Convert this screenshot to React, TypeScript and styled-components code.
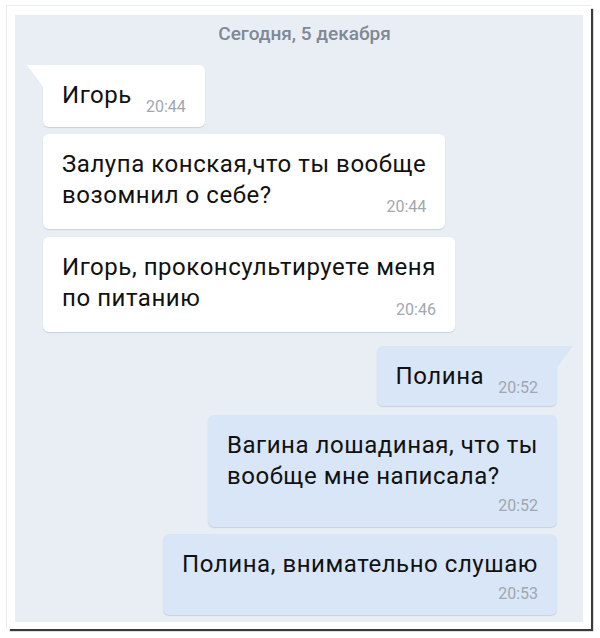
import styled, { createGlobalStyle } from "styled-components";

const GlobalStyle = createGlobalStyle`
  html, body {
    margin: 0;
    padding: 0;
    background: #ffffff;
  }
  body {
    font-family: Roboto, "Noto Sans", sans-serif;
  }
`;

const Page = styled.div`
  width: 600px;
  height: 638px;
  padding: 5px 0 0 6px;
  box-sizing: border-box;
`;

const Frame = styled.div`
  width: 585px;
  height: 624px;
  box-sizing: border-box;
  padding: 9px 8px 7px 8px;
  background: #ffffff;
  border-top: 1px solid #ececec;
  border-left: 1px solid #ececec;
  box-shadow: 3px 3px 1px -1px #3a3a3a;
`;

const Chat = styled.div`
  height: 100%;
  background: #e9eef4;
  display: flex;
  flex-direction: column;
  padding: 8px 26px 0 28px;
  box-sizing: border-box;
`;

const DateLabel = styled.div`
  align-self: center;
  margin-left: 9px;
  font-size: 19px;
  font-weight: 500;
  color: #7f8894;
  line-height: 22px;
  margin-bottom: 20px;
`;

const Row = styled.div<{ $out?: boolean; $gap: number }>`
  display: flex;
  justify-content: ${({ $out }) => ($out ? "flex-end" : "flex-start")};
  margin-top: ${({ $gap }) => $gap}px;
`;

const Bubble = styled.div<{ $out?: boolean; $tail?: boolean; $pb: number }>`
  position: relative;
  background: ${({ $out }) => ($out ? "#d8e6f7" : "#ffffff")};
  border-radius: ${({ $tail, $out }) =>
    $tail ? ($out ? "6px 0 6px 6px" : "0 6px 6px 6px") : "6px"};
  box-shadow: 0 1px 1px rgba(140, 155, 175, 0.35);
  padding: 15px 19px ${({ $pb }) => $pb}px 19px;
  display: flex;
  flex-direction: column;
  color: #111111;
`;

const Line = styled.div`
  font-size: 24px;
  letter-spacing: 0.55px;
  line-height: 31px;
  white-space: nowrap;
`;

const LastRow = styled.div<{ $gap: number }>`
  display: flex;
  align-items: baseline;
  justify-content: space-between;
  gap: ${({ $gap }) => $gap}px;
`;

const Time = styled.span<{ $shift: number }>`
  font-size: 16px;
  line-height: 18px;
  color: #a1a7af;
  position: relative;
  top: ${({ $shift }) => $shift}px;
`;

const OwnTime = styled.span`
  align-self: flex-end;
  font-size: 16px;
  line-height: 18px;
  color: #a1a7af;
  margin-top: 5px;
`;

const Tail = ({ out }: { out?: boolean }) => (
  <svg
    width="17"
    height="23"
    viewBox="0 0 17 23"
    style={{
      position: "absolute",
      top: 0,
      [out ? "right" : "left"]: -16,
      transform: out ? "scaleX(-1)" : undefined,
    }}
  >
    <path d="M0 0 L17 0 L17 23 Z" fill={out ? "#d8e6f7" : "#ffffff"} />
  </svg>
);

type Msg = {
  lines: string[];
  time: string;
  out?: boolean;
  tail?: boolean;
  // "inline"/"beside" – time next to the last line, "own" – time on its own line
  mode: "inline" | "beside" | "own";
  gap: number;
  pb: number;
};

const messages: Msg[] = [
  { lines: ["Игорь"], time: "20:44", tail: true, mode: "inline", gap: 0, pb: 16 },
  {
    lines: ["Залупа конская,что ты вообще", "возомнил о себе?"],
    time: "20:44",
    mode: "beside",
    gap: 7,
    pb: 18,
  },
  {
    lines: ["Игорь, проконсультируете меня", "по питанию"],
    time: "20:46",
    mode: "beside",
    gap: 8,
    pb: 18,
  },
  {
    lines: ["Полина"],
    time: "20:52",
    out: true,
    tail: true,
    mode: "inline",
    gap: 14,
    pb: 14,
  },
  {
    lines: ["Вагина лошадиная, что ты", "вообще мне написала?"],
    time: "20:52",
    out: true,
    mode: "own",
    gap: 9,
    pb: 12,
  },
  {
    lines: ["Полина, внимательно слушаю"],
    time: "20:53",
    out: true,
    mode: "own",
    gap: 7,
    pb: 12,
  },
];

export default function App() {
  return (
    <>
      <GlobalStyle />
      <Page>
        <Frame>
          <Chat>
            <DateLabel>Сегодня, 5 декабря</DateLabel>
            {messages.map((m, i) => {
              const head = m.lines.slice(0, -1);
              const last = m.lines[m.lines.length - 1];
              return (
                <Row key={i} $out={m.out} $gap={m.gap}>
                  <Bubble $out={m.out} $tail={m.tail} $pb={m.pb}>
                    {m.tail && <Tail out={m.out} />}
                    {m.mode === "own" ? (
                      <>
                        {m.lines.map((l) => (
                          <Line key={l}>{l}</Line>
                        ))}
                        <OwnTime>{m.time}</OwnTime>
                      </>
                    ) : (
                      <>
                        {head.map((l) => (
                          <Line key={l}>{l}</Line>
                        ))}
                        <LastRow $gap={14}>
                          <Line>{last}</Line>
                          <Time $shift={9}>{m.time}</Time>
                        </LastRow>
                      </>
                    )}
                  </Bubble>
                </Row>
              );
            })}
          </Chat>
        </Frame>
      </Page>
    </>
  );
}
